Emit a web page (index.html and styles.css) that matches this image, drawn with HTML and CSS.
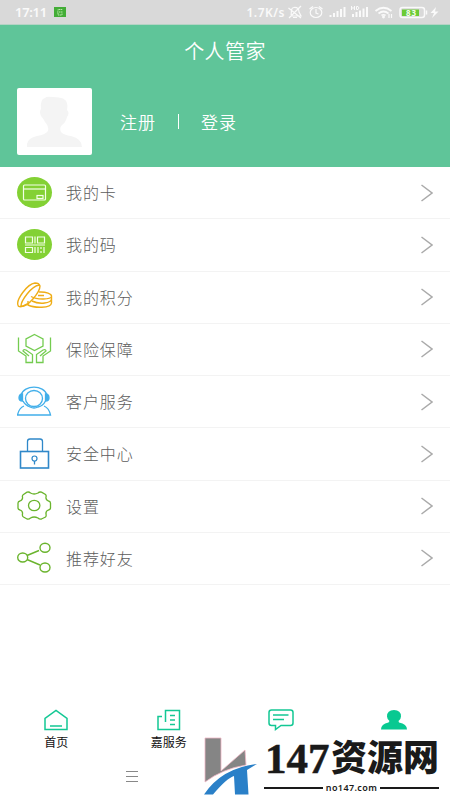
FILE: index.html
```html
<!DOCTYPE html>
<html lang="zh-CN">
<head>
<meta charset="utf-8">
<title>个人管家</title>
<link rel="stylesheet" href="styles.css">
</head>
<body>
<div class="app">
  <div class="status">
    <span class="time">17:11</span>
    <svg class="app-badge" width="12" height="10" viewBox="0 0 12 10"><rect width="12" height="10" fill="#43ad37"/><path d="M4 3.5V2.5H8V3.500M3 5H9M4 6V8H8V6" fill="none" stroke="#b9e8a9" stroke-width="1" stroke-dasharray="1.5 .5"/></svg>
    <span class="speed">1.7K/s</span>
    <svg class="status-icons" width="154" height="18" viewBox="286 3 154 18" fill="none" stroke="#fafafa" stroke-width="1.2">
      <path d="M291 15C292 12 290 8 294 7.5Q299 7 299 12L301 16H291M293 17.5H297M288.500 8L301 18M301 6L289 18"/>
      <ellipse cx="316" cy="12.500" rx="5.800" ry="5"/><path d="M316 9V13L318.500 14M309.500 9L313 6.500M319 6.500L322.500 9"/>
      <path stroke-width="2" d="M330.500 17V15M334 17V13M337.500 17V11M341 17V9M344.500 17V7M353 17V14M356.500 17V12M360 17V10.500M363.500 17V8.500M367 17V7"/>
      <path stroke-width="1" d="M351.500 6V10M354.500 6V10M351.500 8H354.500M356.500 6.500V9.500H358Q360 8 358 6.500H356.500"/>
      <path stroke-width="1.700" d="M375.500 11Q383.500 4.500 391.500 11M378.500 13.500Q383.500 9.500 388.500 13.500M381.500 15.500Q383.500 14 385.500 15.500"/><path d="M389 14V18M391.500 14V18"/><circle cx="383.500" cy="17" r=".8" fill="#fafafa"/>
      <rect x="400" y="7.500" width="24.500" height="10" rx="2.500" stroke-width="1.500"/><rect x="402" y="9.500" width="17" height="6.500" fill="#6ccb35" stroke="none"/><path d="M426.500 10.500V14.500" stroke-width="1.500"/>
      <text x="406" y="15.800" class="battery-text">83</text>
      <path d="M436 7L430.500 13H434L432 18L438.500 11.500H435Z" fill="#fafafa" stroke="none"/>
    </svg>
  </div>
  <header class="header">
    <h1 class="title">个人管家</h1>
    <div class="profile">
      <svg class="avatar" width="75" height="67" viewBox="0 0 75 67"><rect width="75" height="67" rx="2" fill="#fff"/><path d="M10 59V56Q11 50 20 48Q28 47 31 43Q32 38 28 34Q26 30 24 28Q22 24 24 21Q23 11 28 10Q29 8 36 9Q49 9 50 15Q51 18 50 22Q53 25 50 29Q49 34 45 37Q42 40 44 44Q47 47 54 48Q65 51 65 59Z" fill="#f4f4f4"/></svg>
      <a class="register">注册</a><i class="divider"></i><a class="login">登录</a>
    </div>
  </header>
  <main class="menu">
    <div class="row">
      <svg class="icon" viewBox="0 0 36 36"><ellipse cx="17.500" cy="17.500" rx="17.500" ry="15.500" fill="#83d134"/><g fill="none" stroke="#f3ffe8" stroke-width="1.200"><rect x="6.500" y="10" width="22" height="15" rx="1"/><path d="M6.500 14H28.500"/><rect x="20" y="20.500" width="6" height="3"/></g></svg>
      <span class="label">我的卡</span><svg class="arrow" viewBox="0 0 12 18"><path d="M.5 1L11 9L.5 17"/></svg>
    </div>
    <div class="row">
      <svg class="icon" viewBox="0 0 36 36"><ellipse cx="17.500" cy="17.500" rx="17.500" ry="15.500" fill="#83d134"/><path d="M8.500 10H15.500V16H8.500ZM20.500 10H27.500V16H20.500ZM18 9.500V16.500M8 18H28M8.500 20.500H15.500V25.500H8.500ZM18 20V26M21 20V26M24 20V22M24 24V26M27 20V26" fill="none" stroke="#f3ffe8" stroke-width="1.200"/></svg>
      <span class="label">我的码</span><svg class="arrow" viewBox="0 0 12 18"><path d="M.5 1L11 9L.5 17"/></svg>
    </div>
    <div class="row">
      <svg class="icon" viewBox="0 0 36 36" fill="none" stroke="#efad16" stroke-width="1.400"><path d="M1 26C-1 21 10 5 18 4Q22 4 23 7C23 13 11 28 4 27.500Q1 28 1 26M4 27C4 22 14 7 22.500 6"/><path d="M22 13C29 12.500 35 15 34.500 17.500C34 20.500 20 21 14 17.500M34.500 17.500V24C34 29.500 17 29 11 26L11 22M15 22C23 26 34 24 34.500 20M10 25C7 26.500 5 28 3 27.500M21 16.500H27"/></svg>
      <span class="label">我的积分</span><svg class="arrow" viewBox="0 0 12 18"><path d="M.5 1L11 9L.5 17"/></svg>
    </div>
    <div class="row">
      <svg class="icon" viewBox="0 0 36 36" fill="none" stroke="#74cc50" stroke-width="1.300"><path d="M17.500 3.500L26 8V15L17.500 19.500L9 15V8ZM1.500 6.500V20L9 25V31.500H15.500V23.500L9 19Q6 18 6 20L12 25M33.500 6.500V20L26 25V31.500H19.500V23.500L26 19Q29 18 29 20L23 25"/></svg>
      <span class="label">保险保障</span><svg class="arrow" viewBox="0 0 12 18"><path d="M.5 1L11 9L.5 17"/></svg>
    </div>
    <div class="row">
      <svg class="icon" viewBox="0 0 36 36" fill="none" stroke="#42afea" stroke-width="1.300"><ellipse cx="17" cy="14.500" rx="8.500" ry="8"/><path d="M4 11C7 .5 27 .5 30 11"/><path d="M5.500 10Q2 10 2 14Q2 17 5.500 17ZM28.500 10Q32 10 32 14Q32 17 28.500 17Z" fill="#42afea"/><path d="M6 17Q8 21 13 23Q17 25 21 23Q26 22 28.500 17M7 22Q2 24 .5 31H33.500Q32 24 27 22"/></svg>
      <span class="label">客户服务</span><svg class="arrow" viewBox="0 0 12 18"><path d="M.5 1L11 9L.5 17"/></svg>
    </div>
    <div class="row">
      <svg class="icon" viewBox="0 0 36 36" fill="none" stroke="#2f88c9" stroke-width="1.300"><path d="M10.500 15V5.500Q10.500 3 13 3H23Q25.500 3 25.500 5.500V15"/><rect x="3.500" y="15.500" width="28" height="16.500" stroke-width="1.600"/><circle cx="17.500" cy="22.500" r="2.500" stroke-width="1.200"/><path d="M17.500 25V28.500"/></svg>
      <span class="label">安全中心</span><svg class="arrow" viewBox="0 0 12 18"><path d="M.5 1L11 9L.5 17"/></svg>
    </div>
    <div class="row">
      <svg class="icon" viewBox="0 0 36 36" fill="none" stroke="#6ab42d" stroke-width="1.300"><path d="M10 4.200Q12 3.500 13.500 5Q17 7 21 5Q22.500 3.500 24.500 4.200L28.500 6.500Q29.500 7.500 29 9Q28.500 12 31.500 13Q33.500 13.500 33.500 15V20Q33.500 21.500 31.500 22Q28.500 23 29 26Q29.500 28 28.500 29L24.500 31Q22.500 31.500 21 30Q17 28 13.500 30Q12 31.500 10 31L6.500 29Q5 28 5.500 26Q6 23 3 22Q1 21.500 1 20V15Q1 13.500 3 13Q6 12 5.500 9Q5 7.500 6.500 6.500Z"/><ellipse cx="17.200" cy="17.500" rx="5.700" ry="5.200"/></svg>
      <span class="label">设置</span><svg class="arrow" viewBox="0 0 12 18"><path d="M.5 1L11 9L.5 17"/></svg>
    </div>
    <div class="row">
      <svg class="icon" viewBox="0 0 36 36" fill="none" stroke="#6ab42d" stroke-width="1.400"><ellipse cx="5.700" cy="17.500" rx="5" ry="4.500"/><ellipse cx="28" cy="7.800" rx="5" ry="4.500"/><ellipse cx="28" cy="27.500" rx="5" ry="4.500"/><path d="M10 15.500L22 10.500M10 19.500L23 25"/></svg>
      <span class="label">推荐好友</span><svg class="arrow" viewBox="0 0 12 18"><path d="M.5 1L11 9L.5 17"/></svg>
    </div>
  </main>
  <nav class="tabs">
    <div class="tab"><svg viewBox="0 0 28 24"><path d="M3 20.500V9.500L14 1.500L25 9.500V20.500ZM8 17H20"/></svg><span>首页</span></div>
    <div class="tab"><svg viewBox="0 0 28 24"><path d="M7 7.500H3V20.500H24.500V1.500H10.500V13M15 6.500H20M15 11H20M15 15.500H20"/></svg><span>嘉服务</span></div>
    <div class="tab"><svg viewBox="0 0 28 24"><path d="M4.500 1H23.500Q26 1 26 3.500V14Q26 16.500 23.500 16.500H14L8.500 20.500V16.500H4.500Q2 16.500 2 14V3.500Q2 1 4.500 1M6 6H21.500M6 10.500H17"/></svg></div>
    <div class="tab"><svg viewBox="0 0 28 24"><path class="solid" d="M1 20.500Q1 15 8.500 13.500L9.500 12Q7 10 7 7.500Q7 1 14 1Q21 1 21 7.500Q21 10 18.500 12L19 13.500Q27 15 27 20.500Z"/></svg></div>
  </nav>
  <footer class="system-nav"><i class="bar"></i><i class="bar"></i><i class="bar"></i></footer>
  <div class="brand">
    <svg class="brand-mark" width="54" height="60" viewBox="0 0 54 60"><path d="M1 1H17V34L41 13L42 28Q18 32 1 45Z" fill="#858585" stroke="#efb5c4" stroke-width=".8"/><path d="M0 57.500Q18 31 53 27L43 33L44.500 57.500H31L30 39Q23 41 9 57.500Z" fill="#2a80c8"/></svg>
    <div class="brand-words">
      <div class="brand-name"><span class="num">147</span><span class="han">资源网</span></div>
      <div class="domain">no147.com</div>
    </div>
  </div>
</div>
</body>
</html>
```
FILE: styles.css
```css
* { box-sizing: border-box; }
body { margin: 0; background: #fff; font-family: "Noto Sans CJK SC", sans-serif; }
.app { position: relative; width: 450px; height: 800px; display: flex; flex-direction: column; overflow: hidden; }
.status { height: 25px; flex: none; background: #d9d9d9; border-bottom: 1px solid #b5d3c5; display: flex; align-items: center; padding: 0 10px 0 15px; color: #fafafa; font-family: "Noto Sans", sans-serif; font-weight: 600; }
.time { width: 39px; font-size: 13px; letter-spacing: -.3px; white-space: nowrap; }
.speed { margin-left: auto; margin-right: 1px; font-size: 12px; letter-spacing: .5px; }
.battery-text { font: 700 8px "Noto Sans", sans-serif; fill: #f4ffed; stroke: none; letter-spacing: 1px; }
.header { height: 142px; flex: none; background: #5fc599; color: #fff; }
.title { margin: 0; height: 63px; padding-top: 11px; text-align: center; font-size: 20px; line-height: 30px; font-weight: 350; letter-spacing: .4px; }
.profile { display: flex; align-items: center; height: 67px; padding-left: 17px; font-size: 17px; font-weight: 350; letter-spacing: 1px; }
.register { margin-left: 28px; width: 58px; }
.divider { width: 1px; height: 15px; background: #fff; }
.login { margin-left: 22px; }
.menu { flex: none; }
.row { height: 52.25px; display: flex; align-items: center; padding: 0 17px; border-bottom: 1.5px solid #f3f3f3; }
.icon { width: 36px; height: 36px; flex: none; }
.label { margin-left: 13px; padding-bottom: 1px; color: #5c5c5c; font-size: 16px; font-weight: 300; letter-spacing: .9px; line-height: 24px; }
.arrow { width: 12px; height: 18px; margin-left: auto; fill: none; stroke: #aaa; stroke-width: 1.5; }
.tabs { height: 78px; margin-top: 124px; flex: none; display: grid; grid-template-columns: repeat(4, 1fr); }
.tab { display: flex; flex-direction: column; align-items: center; font-size: 12px; line-height: 18px; color: #111; }
.tab svg { width: 28px; height: 24px; fill: none; stroke: #13c894; stroke-width: 1.5; }
.tab .solid { fill: #08c991; stroke: none; }
.system-nav { position: absolute; left: 126px; top: 771px; width: 12px; display: grid; gap: 4px; }
.bar { height: 1px; background: #888; }
.brand { position: absolute; left: 204px; top: 737px; display: flex; color: #1a1a1a; }
.brand-words { width: 175px; margin-left: 6px; }
.brand-name { height: 43px; display: flex; align-items: flex-start; white-space: nowrap; }
.num { width: 67px; padding-left: 1px; font: 700 43px/43px "Liberation Serif", serif; -webkit-text-stroke: .5px #1a1a1a; }
.han { font-size: 36px; line-height: 37px; font-weight: 900; }
.domain { display: flex; align-items: center; gap: 3px; height: 15px; font: 600 9px/13px "Noto Sans", sans-serif; letter-spacing: .4px; }
.domain::before, .domain::after { content: ""; height: 2px; flex: 1; background: #1a1a1a; }
```
